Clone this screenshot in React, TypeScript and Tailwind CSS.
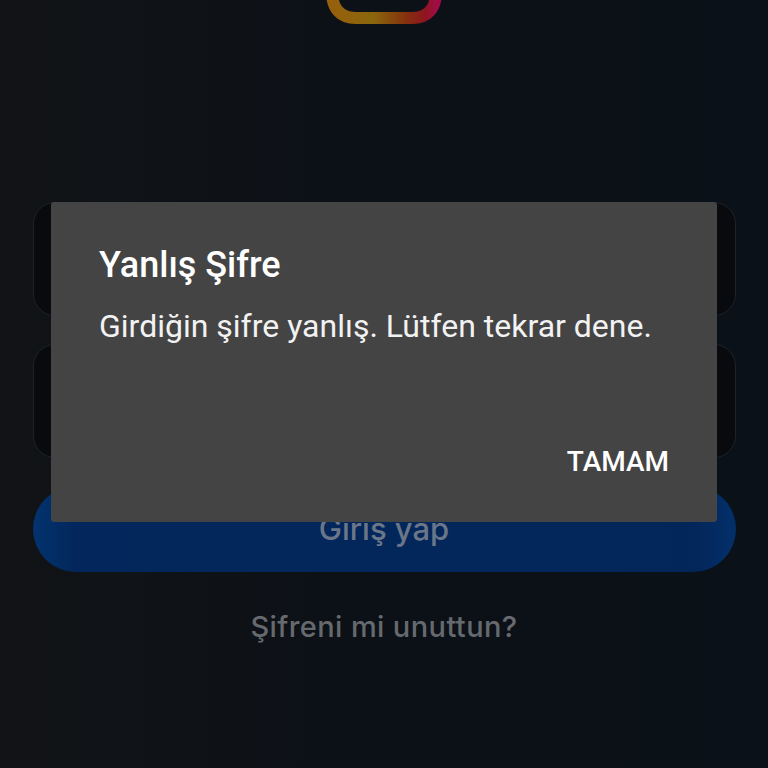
import React from 'react';

const Logo: React.FC = () => (
  <svg width="116" height="24" viewBox="0 0 116 24" className="block">
    <defs>
      <linearGradient id="logoStroke" x1="0" y1="0" x2="1" y2="0">
        <stop offset="0" stopColor="#96600c" />
        <stop offset="0.4" stopColor="#8a660c" />
        <stop offset="0.72" stopColor="#84300e" />
        <stop offset="0.9" stopColor="#8f1420" />
        <stop offset="1" stopColor="#a00d45" />
      </linearGradient>
    </defs>
    <path
      d="M6 -24 V-8 C6 8 14 18 30 18 H86 C102 18 110 8 110 -8 V-24"
      fill="none"
      stroke="url(#logoStroke)"
      strokeWidth="12"
    />
  </svg>
);

export default function App() {
  return (
    <div className="relative h-[768px] w-[768px] overflow-hidden bg-gradient-to-r from-[#111316] via-[#0c1117] to-[#0a1118] font-['Roboto',sans-serif]">
      <div className="flex flex-col items-center">
        <Logo />
        <div className="mt-[178px] flex w-[703px] flex-col gap-[28px]">
          <div className="h-[114px] rounded-[22px] border border-[#1d2329] bg-[#080a0d]" />
          <div className="h-[114px] rounded-[22px] border border-[#1d2329] bg-[#080a0d]" />
          <div className="flex h-[86px] items-center justify-center rounded-[43px] bg-[linear-gradient(90deg,#03336f_0%,#03275c_6%,#03265a_94%,#03306a_100%)] font-['Inter',sans-serif] text-[31px] font-medium text-[#6b7789]">
            Giriş yap
          </div>
        </div>
        <p className="mt-[33px] font-['Inter',sans-serif] text-[29px] leading-[44px] font-medium tracking-[0.4px] text-[#666a6f]">
          Şifreni mi unuttun?
        </p>
      </div>

      <div className="absolute top-[202px] left-[51px] flex h-[320px] w-[666px] flex-col rounded-[3px] bg-[#444444] pr-[48px] pl-[48px] text-white">
        <h1 className="mt-[39px] text-[36px] leading-[48px] font-medium">Yanlış Şifre</h1>
        <p className="mt-[17px] text-[32px] leading-[40px] text-[#f2f2f2]">
          Girdiğin şifre yanlış. Lütfen tekrar dene.
        </p>
        <button className="mt-auto mb-[40px] self-end text-[28px] leading-[40px] font-medium">TAMAM</button>
      </div>
    </div>
  );
}
